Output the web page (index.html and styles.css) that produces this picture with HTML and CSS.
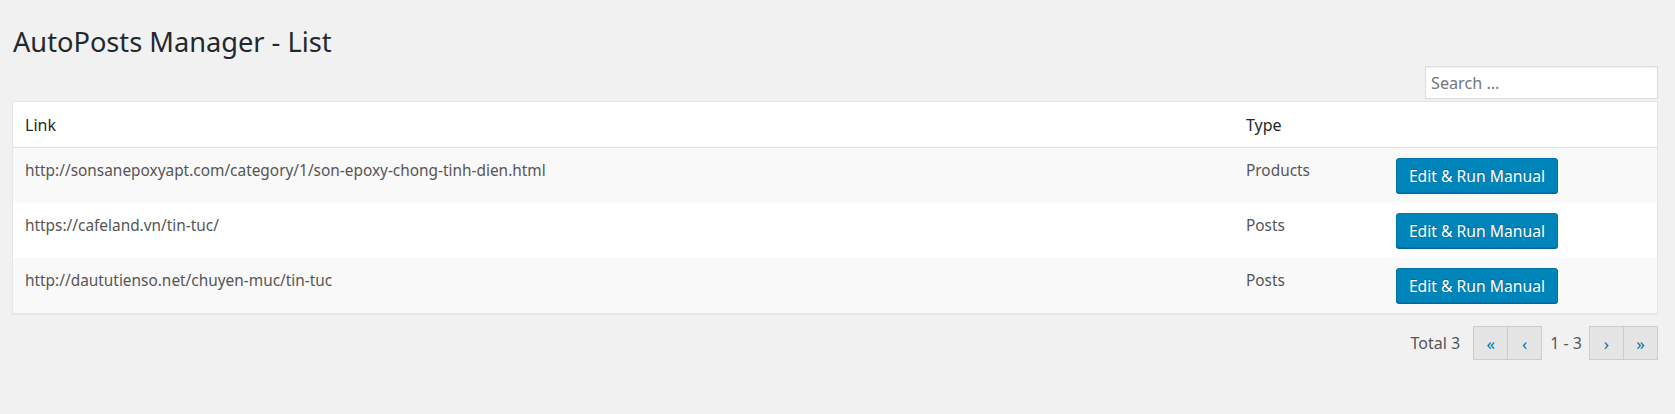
FILE: index.html
```html
<!DOCTYPE html>
<html lang="en">
<head>
<meta charset="utf-8">
<title>AutoPosts Manager - List</title>
<link rel="stylesheet" href="styles.css">
</head>
<body>
<div class="wrap">
  <h1 class="title">AutoPosts Manager - List</h1>
  <div class="search-bar">
    <input class="search" type="text" placeholder="Search ...">
  </div>
  <table class="list">
    <thead>
      <tr>
        <th class="col-link">Link</th>
        <th class="col-type">Type</th>
        <th class="col-action"></th>
      </tr>
    </thead>
    <tbody>
      <tr class="alt">
        <td>http://sonsanepoxyapt.com/category/1/son-epoxy-chong-tinh-dien.html</td>
        <td class="type">Products</td>
        <td class="act"><button class="btn">Edit &amp; Run Manual</button></td>
      </tr>
      <tr>
        <td>https://cafeland.vn/tin-tuc/</td>
        <td class="type">Posts</td>
        <td class="act"><button class="btn">Edit &amp; Run Manual</button></td>
      </tr>
      <tr class="alt">
        <td>http://daututienso.net/chuyen-muc/tin-tuc</td>
        <td class="type">Posts</td>
        <td class="act"><button class="btn">Edit &amp; Run Manual</button></td>
      </tr>
    </tbody>
  </table>
  <div class="pager">
    <span class="total">Total 3</span>
    <a class="pg-btn">&laquo;</a><a class="pg-btn">&lsaquo;</a>
    <span class="range">1 - 3</span>
    <a class="pg-btn">&rsaquo;</a><a class="pg-btn">&raquo;</a>
  </div>
</div>
</body>
</html>
```

FILE: styles.css
```css
html, body {
  margin: 0;
  padding: 0;
  background: #f1f1f1;
  font-family: "Noto Sans", "Open Sans", sans-serif;
  color: #444;
  font-size: 15px;
}
.wrap {
  padding: 23px 17px 0 12px;
}
.title {
  margin: 0;
  font-weight: 400;
  font-size: 27.2px;
  line-height: 38px;
  color: #23282d;
  padding-left: 1px;
}
.search-bar {
  display: flex;
  justify-content: flex-end;
  margin-top: 5px;
  margin-bottom: 2px;
}
.search {
  box-sizing: border-box;
  width: 233px;
  height: 33px;
  border: 1px solid #ddd;
  background: #fff;
  font-family: inherit;
  font-size: 16.2px;
  padding: 0 5px;
  color: #32373c;
  box-shadow: inset 0 1px 2px rgba(0,0,0,.07);
  outline: none;
}
.search::placeholder {
  color: #72777c;
}
.list {
  width: 100%;
  border-collapse: collapse;
  background: #fff;
  border: 1px solid #e5e5e5;
  box-shadow: 0 1px 1px rgba(0,0,0,.04);
}
.list th {
  text-align: left;
  font-weight: 400;
  color: #23282d;
  padding: 10px 10px 10px 12px;
  height: 25px;
  line-height: 24px;
  border-bottom: 1px solid #e1e1e1;
  font-size: 16px;
}
.list th.col-type { padding-left: 10px; }
.col-link { width: 1201px; }
.col-type { width: 130px; }
.list td {
  vertical-align: top;
  padding: 12px 10px 0 12px;
  height: 43px;
  line-height: 22px;
  color: #555;
  font-size: 15.4px;
}
.list td.type {
  padding-left: 10px;
}
.list td.act {
  padding: 10px 10px 0 10px;
  height: 45px;
}
.list tr.alt td {
  background: #f9f9f9;
}
.btn {
  box-sizing: border-box;
  height: 35px;
  width: 162px;
  padding: 0 8px;
  background: #0085ba;
  border: 1px solid #0073aa;
  border-radius: 3px;
  box-shadow: 0 1px 0 #006799;
  color: #fff;
  font-family: inherit;
  font-size: 15.7px;
  text-shadow: 0 -1px 1px #006799;
  cursor: pointer;
}
.pager {
  display: flex;
  justify-content: flex-end;
  align-items: center;
  margin-top: 12px;
  color: #555;
  font-size: 16px;
}
.total {
  margin-right: 14px;
}
.pg-btn {
  box-sizing: border-box;
  display: inline-flex;
  align-items: center;
  justify-content: center;
  width: 35px;
  height: 34px;
  border: 1px solid #ccc;
  background: #e5e5e5;
  color: #0073aa;
  font-size: 17px;
  margin-left: -1px;
}
.range {
  padding: 0 8px;
}
```
